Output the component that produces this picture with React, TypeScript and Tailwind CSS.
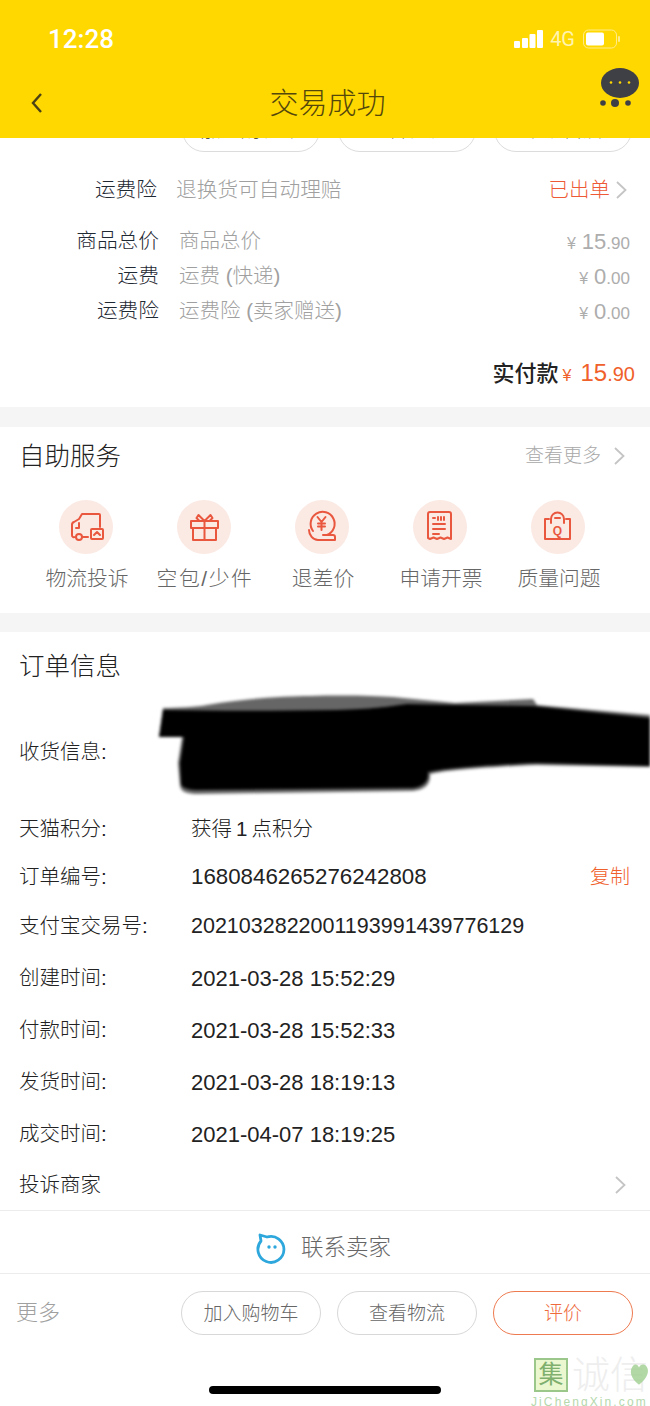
import React from 'react';

const cjk = "font-['Liberation_Sans','Noto_Sans_CJK_SC',sans-serif]";

const Chevron = ({ className = '' }: { className?: string }) => (
  <svg width="13" height="20" viewBox="0 0 13 20" fill="none" className={className}>
    <path d="M2 2l8.5 8L2 18" stroke="#c4c4c4" strokeWidth="1.8" />
  </svg>
);

const Price = ({ int, dec }: { int: string; dec: string }) => (
  <span className="flex items-baseline text-[#adadad]">
    <span className="text-[16px] mr-[6px]">¥</span>
    <span className="text-[22px]">{int}</span>
    <span className="text-[17px]">.{dec}</span>
  </span>
);

const stroke = { stroke: '#e9573f', strokeWidth: 2, fill: 'none', strokeLinecap: 'round', strokeLinejoin: 'round' } as const;

const TruckIcon = () => (
  <svg width="54" height="54" viewBox="0 0 54 54">
    <g {...stroke}>
      <path d="M41 27V15a1 1 0 0 0-1-1H23l-3 5-5 3a3 3 0 0 0-2 3v10a2 2 0 0 0 3 2" />
      <path d="M20 23v5h-3" />
      <circle cx="20" cy="37" r="3" />
      <path d="M24 37h5" />
      <rect x="32" y="29" width="12" height="10" rx="1" />
      <path d="M35 35l3-3 3 3" />
    </g>
  </svg>
);

const GiftIcon = () => (
  <svg width="54" height="54" viewBox="0 0 54 54">
    <g {...stroke}>
      <rect x="14" y="21" width="27" height="7" />
      <path d="M16 28v12h23V28M27.500 21v19" />
      <path d="M27.500 21l-6-6-2 3 3 3M27.500 21l6-6 2 3-3 3" />
    </g>
  </svg>
);

const CoinIcon = () => (
  <svg width="54" height="54" viewBox="0 0 54 54">
    <g {...stroke}>
      <path d="M18 31a12 12 0 1 1 14 4" />
      <path d="M14 30c0 5 4 10 9 10h17v-3a2 2 0 0 0-2-2H28" />
      <path d="M22.500 17l4 5 4-5M26.500 22v8M23 23.500h7M23 26.500h7" />
    </g>
  </svg>
);

const ReceiptIcon = () => (
  <svg width="54" height="54" viewBox="0 0 54 54">
    <g {...stroke}>
      <path d="M15 14a2 2 0 0 1 2-2h19a2 2 0 0 1 2 2v25l-3.500-1.500-3.500 1.500-3.500-1.500-3.500 1.500-3.500-1.500-3.500 1.500-2-1z" />
      <path d="M20 24h12M20 29h12M20 34h6" />
      <path d="M20 18h2M25 17v3M28 17v3M31 17v3" />
    </g>
  </svg>
);

const BagIcon = () => (
  <svg width="54" height="54" viewBox="0 0 54 54">
    <g {...stroke}>
      <path d="M18 19h-4v20h25V19h-4" />
      <path d="M20 23v-4a6.500 6.500 0 0 1 13 0v4" />
      <path d="M24 18h5" />
    </g>
    <text x="26.500" y="35" textAnchor="middle" fontSize="12" fontWeight="700" fill="#e9573f" fontFamily="Liberation Sans">Q</text>
  </svg>
);

const services = [
  { label: '物流投诉', icon: <TruckIcon />, cls: '' },
  { label: '空包/少件', icon: <GiftIcon />, cls: 'tracking-[1.6px]' },
  { label: '退差价', icon: <CoinIcon />, cls: '' },
  { label: '申请开票', icon: <ReceiptIcon />, cls: '' },
  { label: '质量问题', icon: <BagIcon />, cls: '' },
];

const orderRows = [
  { label: '天猫积分:', value: '获得\u20091\u2009点积分', h: 'h-[48px]', size: 'text-[20.500px]' },
  { label: '订单编号:', value: '1680846265276242808', h: 'h-[48px]', size: 'text-[22.300px]', copy: true },
  { label: '支付宝交易号:', value: '2021032822001193991439776129', h: 'h-[51px]', size: 'text-[21.500px]' },
  { label: '创建时间:', value: '2021-03-28 15:52:29', h: 'h-[52px]', size: 'text-[22px]' },
  { label: '付款时间:', value: '2021-03-28 15:52:33', h: 'h-[52px]', size: 'text-[22px]' },
  { label: '发货时间:', value: '2021-03-28 18:19:13', h: 'h-[52px]', size: 'text-[22px]' },
  { label: '成交时间:', value: '2021-04-07 18:19:25', h: 'h-[52px]', size: 'text-[22px]' },
];

const App: React.FC = () => {
  return (
    <div className={`relative w-[650px] h-[1406px] overflow-hidden bg-white ${cjk}`}>
      {/* Yellow header */}
      <header className="h-[138px] bg-[#ffd800]">
        <div className="h-[78px] flex items-center justify-between pl-[48px] pr-[29px]">
          <span className="text-[26px] font-medium text-white font-['Roboto',sans-serif] mb-[-1px]">12:28</span>
          <div className="flex items-center">
            <svg width="29" height="18" viewBox="0 0 29 18" fill="#fff">
              <rect x="0" y="11" width="6" height="7" rx="1" />
              <rect x="8" y="8" width="6" height="10" rx="1" />
              <rect x="15.500" y="4" width="6" height="14" rx="1" />
              <rect x="23" y="0" width="6" height="18" rx="1" />
            </svg>
            <span className="ml-[7px] text-[20px] text-[#fff4b0] font-['Roboto',sans-serif]">4G</span>
            <svg width="38" height="20" viewBox="0 0 38 20" fill="none" className="ml-[8px]">
              <rect x="0.500" y="1" width="33" height="18" rx="5" stroke="#ffeb8a" />
              <rect x="3" y="3.500" width="18" height="13" rx="2" fill="#fff" />
              <rect x="35" y="7" width="2" height="6" rx="1" fill="#ffeb8a" />
            </svg>
          </div>
        </div>
        <div className="relative h-[50px] flex items-center justify-center pt-[4px] pl-[5px]">
          <svg width="14" height="22" viewBox="0 0 14 22" fill="none" className="absolute left-[30px] top-[14px]">
            <path d="M11 2L3 11l8 9" stroke="#4a4214" strokeWidth="2.400" />
          </svg>
          <span className="text-[29px] font-light text-[#54470c]">交易成功</span>
          <svg width="42" height="42" viewBox="0 0 42 42" className="absolute left-[600px] top-[-10px]">
            <ellipse cx="20" cy="15" rx="19" ry="15" fill="#3f3f46" />
            <circle cx="11" cy="14.500" r="1.300" fill="#ffd800" />
            <circle cx="20" cy="14.500" r="1.300" fill="#ffd800" />
            <circle cx="29" cy="14.500" r="1.300" fill="#ffd800" />
            <circle cx="3" cy="35" r="2.800" fill="#3f3f46" />
            <circle cx="15" cy="35" r="4" fill="#3f3f46" />
            <circle cx="28" cy="35" r="2.800" fill="#3f3f46" />
          </svg>
        </div>
      </header>

      {/* Summary, with the button row cut off by the header */}
      <section className="h-[269px]">
        <div className="h-[14px] overflow-hidden flex items-end gap-[18px] pl-[182px]">
          {['加入购物车', '查看物流', '申请售后'].map((t) => (
            <div key={t} className="shrink-0 w-[138px] h-[44px] rounded-[22px] border border-[#dcdcdc] flex items-center justify-center text-[20px] font-light text-[#555]">
              {t}
            </div>
          ))}
        </div>
        <div className="h-[40px] mt-[17px] pt-[2px] flex items-center pr-[22px]">
          <span className="w-[157px] text-right text-[20.700px] font-light text-[#1f2933]">运费险</span>
          <span className="ml-[19px] text-[20.700px] font-light text-[#a0a0a0]">退换货可自动理赔</span>
          <span className="ml-auto text-[20.500px] font-light text-[#ee5a35]">已出单</span>
          <Chevron className="ml-[5px]" />
        </div>
        <div className="mt-[14px] pr-[20px]">
          {[
            { label: '商品总价', value: '商品总价', int: '15', dec: '90' },
            { label: '运费', value: '运费 (快递)', int: '0', dec: '00' },
            { label: '运费险', value: '运费险 (卖家赠送)', int: '0', dec: '00' },
          ].map((r) => (
            <div key={r.value} className="h-[35px] pt-[1px] flex items-center">
              <span className="w-[159px] text-right text-[20.700px] font-light text-[#1f2933]">{r.label}</span>
              <span className="ml-[20px] text-[20.500px] font-light text-[#a0a0a0]">{r.value}</span>
              <span className="ml-auto">
                <Price int={r.int} dec={r.dec} />
              </span>
            </div>
          ))}
        </div>
        <div className="mt-[27px] h-[36px] flex items-center justify-end pr-[15px]">
          <span className="text-[22px] font-medium text-[#222] mr-[4px]">实付款</span>
          <span className="flex items-baseline text-[#f0602a]">
            <span className="text-[16px] mr-[9px]">¥</span>
            <span className="text-[24px]">15</span>
            <span className="text-[20px]">.90</span>
          </span>
        </div>
      </section>

      <div className="h-[20px] bg-[#f5f5f5]" />

      {/* Self service */}
      <section className="h-[186px]">
        <div className="h-[58px] flex items-center pl-[19px] pr-[24px]">
          <span className="text-[25.500px] font-light text-[#222]">自助服务</span>
          <span className="ml-auto text-[19px] font-light text-[#a8a8a8]">查看更多</span>
          <Chevron className="ml-[12px]" />
        </div>
        <div className="mt-[15px] grid grid-cols-[repeat(5,118px)] px-[27px]">
          {services.map((s) => (
            <div key={s.label} className="flex flex-col items-center">
              <div className="w-[54px] h-[54px] rounded-full bg-[#fbe9e3]">{s.icon}</div>
              <span className={`mt-[9px] ml-[2px] text-[20.800px] font-light text-[#666] whitespace-nowrap ${s.cls}`}>{s.label}</span>
            </div>
          ))}
        </div>
      </section>

      <div className="h-[19px] bg-[#f5f5f5]" />

      {/* Order info */}
      <section className="pl-[19px] pr-[20px] text-[#222]">
        <div className="h-[68px] flex items-center">
          <span className="text-[25.500px] font-light">订单信息</span>
        </div>
        <div className="relative h-[105px] flex items-center">
          <span className="text-[20.500px] font-light">收货信息:</span>
          {/* hand-drawn redaction over the address */}
          <svg width="493" height="104" viewBox="0 0 493 104" className="absolute left-[138px] top-[-6px] blur-[1.500px]">
            <path d="M6 14C20 14 40 13 50 11C90 4 130 2 153 2C190 1 220 2 236 3L298 9L376 5L380 11L493 21V73L380 71C330 73 290 76 273 80C274 90 268 96 256 97L41 100C30 100 24 98 23 92L21 69L25 43H2Z" fill="#666" />
            <path d="M6 16C60 17 120 17 180 16C215 15 230 13 250 10L298 11L376 12L493 24V72L380 69C330 71 290 74 271 78C272 88 266 93 256 94L42 96C32 96 25 94 24 90L23 69L27 43H2Z" fill="#000" />
          </svg>
        </div>
        {orderRows.map((r) => (
          <div key={r.label} className={`${r.h} flex items-center`}>
            <span className="w-[172px] shrink-0 text-[20.500px] font-light whitespace-nowrap">{r.label}</span>
            <span className={`${r.size} font-light text-[#222]`}>{r.value}</span>
            {r.copy && <span className="ml-auto text-[20px] font-light text-[#f0602a]">复制</span>}
          </div>
        ))}
        <div className="h-[50px] flex items-center justify-between pr-[3px]">
          <span className="text-[20.500px] font-light">投诉商家</span>
          <Chevron />
        </div>
      </section>

      {/* Contact seller */}
      <div className="h-[64px] pt-[12px] border-y border-[#ececec] flex items-center justify-center pr-[4px]">
        <svg width="32" height="32" viewBox="0 0 32 32" fill="none">
          <path d="M5 3l1 6a13 13 0 1 0 6-4z" stroke="#2ea7dc" strokeWidth="2.800" strokeLinejoin="round" />
          <circle cx="14" cy="15" r="1.700" fill="#2ea7dc" />
          <circle cx="20" cy="15" r="1.700" fill="#2ea7dc" />
        </svg>
        <span className="ml-[14px] text-[22.500px] font-light text-[#666]">联系卖家</span>
      </div>

      {/* Bottom actions */}
      <div className="h-[75px] flex items-center pl-[16px] pr-[17px]">
        <span className="pt-[2px] text-[22px] font-light text-[#a0a0a0]">更多</span>
        <div className="ml-auto flex gap-[16px] pt-[2px]">
          <div className="w-[140px] h-[44px] pt-[3px] rounded-[22px] border border-[#d8d8d8] flex items-center justify-center text-[19px] font-light text-[#666]">加入购物车</div>
          <div className="w-[140px] h-[44px] pt-[3px] rounded-[22px] border border-[#d8d8d8] flex items-center justify-center text-[19px] font-light text-[#666]">查看物流</div>
          <div className="w-[140px] h-[44px] pt-[3px] rounded-[22px] border border-[#ee7a50] flex items-center justify-center text-[19px] font-light text-[#ee6a3c]">评价</div>
        </div>
      </div>

      {/* Home indicator */}
      <div className="mt-[37px] mx-auto w-[232px] h-[8px] rounded-full bg-black" />

      {/* Watermark */}
      <div className="absolute left-[534px] top-[1358px] w-[116px]">
        <div className="flex items-center">
          <span className="shrink-0 w-[34px] h-[34px] bg-[#eaf7cf] border-2 border-[#9cc78a] text-[#7fb06e] text-[25px] leading-[29px] text-center">集</span>
          <span className="ml-[4px] text-[38px] leading-[34px] font-light text-[#eeeeee] whitespace-nowrap">诚信</span>
        </div>
        <svg width="22" height="28" viewBox="0 0 20 26" className="absolute left-[94px] top-[3px]">
          <path d="M10 22C2 16 1 9 4 5c2-3 5-2 6 1 1-3 5-4 7-1 3 4 1 11-7 17z" fill="#9fcf8f" opacity="0.800" />
        </svg>
        <div className="mt-[5px] ml-[-3px] text-[12px] leading-[10px] tracking-[2.100px] text-[#b5d8ac] whitespace-nowrap">JiChengXin.com</div>
      </div>
    </div>
  );
};

export default App;
